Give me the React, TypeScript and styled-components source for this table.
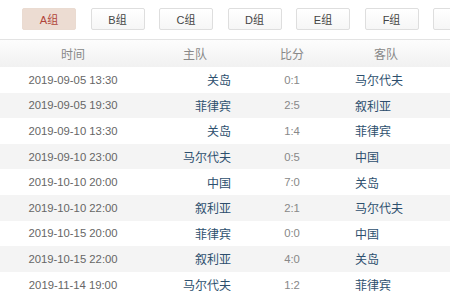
import React from "react";
import styled, { createGlobalStyle } from "styled-components";

const Global = createGlobalStyle`
  html, body { margin: 0; padding: 0; background: #fff; }
  body { width: 450px; height: 300px; overflow: hidden; font-family: "Liberation Sans", Arial, "Noto Sans CJK SC", sans-serif; font-size: 12px; }
`;

const Page = styled.div`
  width: 450px;
  height: 300px;
  overflow: hidden;
`;

const Tabs = styled.div`
  display: flex;
  gap: 14.5px;
  padding: 8px 0 9px 22px;
  white-space: nowrap;
  overflow: hidden;
`;

const Tab = styled.div<{ $active?: boolean }>`
  flex: 0 0 54px;
  height: 22px;
  box-sizing: border-box;
  border: 1px solid ${(p) => (p.$active ? "#eadbd1" : "#dedede")};
  border-radius: 2px;
  background: ${(p) => (p.$active ? "#ecdcd2" : "linear-gradient(#ffffff, #f6f6f6)")};
  color: ${(p) => (p.$active ? "#b0453a" : "#444")};
  display: flex;
  align-items: center;
  justify-content: center;
  font-size: 11px;
`;

const cols = "146px 85px 122px 1fr";

const Header = styled.div`
  display: grid;
  grid-template-columns: ${cols};
  height: 28px;
  box-sizing: border-box;
  border-top: 1px solid #e3e3e3;
  background: linear-gradient(#fdfdfd, #f1f1f1);
  color: #888;
  align-items: center;
`;

const HCell = styled.div<{ $align: "left" | "center" | "right"; $pad?: number }>`
  text-align: ${(p) => p.$align};
  padding-left: ${(p) => (p.$align === "left" ? p.$pad ?? 0 : 0)}px;
  padding-right: ${(p) => (p.$align === "right" ? p.$pad ?? 0 : 0)}px;
`;

const Row = styled.div<{ $odd: boolean }>`
  display: grid;
  grid-template-columns: ${cols};
  height: 25.6px;
  align-items: center;
  background: ${(p) => (p.$odd ? "#f4f4f4" : "#ffffff")};
`;

const Time = styled.div`
  text-align: center;
  color: #666;
  font-size: 11.3px;
`;

const Team = styled.div<{ $align: "left" | "right" }>`
  text-align: ${(p) => p.$align};
  color: #2d4f6e;
  padding-left: ${(p) => (p.$align === "left" ? 2 : 0)}px;
`;

const Score = styled.div`
  text-align: center;
  color: #888;
  font-size: 11.3px;
`;

const tabs = ["A组", "B组", "C组", "D组", "E组", "F组", "G组"];

const matches = [
  ["2019-09-05 13:30", "关岛", "0:1", "马尔代夫"],
  ["2019-09-05 19:30", "菲律宾", "2:5", "叙利亚"],
  ["2019-09-10 13:30", "关岛", "1:4", "菲律宾"],
  ["2019-09-10 23:00", "马尔代夫", "0:5", "中国"],
  ["2019-10-10 20:00", "中国", "7:0", "关岛"],
  ["2019-10-10 22:00", "叙利亚", "2:1", "马尔代夫"],
  ["2019-10-15 20:00", "菲律宾", "0:0", "中国"],
  ["2019-10-15 22:00", "叙利亚", "4:0", "关岛"],
  ["2019-11-14 19:00", "马尔代夫", "1:2", "菲律宾"],
];

export default function App() {
  return (
    <Page>
      <Global />
      <Tabs>
        {tabs.map((t, i) => (
          <Tab key={t} $active={i === 0}>
            {t}
          </Tab>
        ))}
      </Tabs>
      <Header>
        <HCell $align="center">时间</HCell>
        <HCell $align="right" $pad={24}>主队</HCell>
        <HCell $align="center">比分</HCell>
        <HCell $align="left" $pad={21}>客队</HCell>
      </Header>
      {matches.map((m, i) => (
        <Row key={i} $odd={i % 2 === 1}>
          <Time>{m[0]}</Time>
          <Team $align="right">{m[1]}</Team>
          <Score>{m[2]}</Score>
          <Team $align="left">{m[3]}</Team>
        </Row>
      ))}
    </Page>
  );
}
